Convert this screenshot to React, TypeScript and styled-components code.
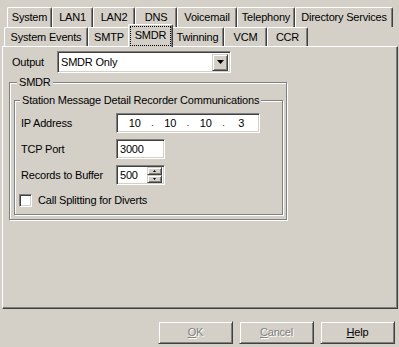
import React from "react";
import styled, { createGlobalStyle, css } from "styled-components";

const Global = createGlobalStyle`
  html, body { margin: 0; padding: 0; background: #d4d0c8; }
  body { font-family: "Liberation Sans", Arial, sans-serif; font-size: 11px; letter-spacing: -0.2px; color: #000; }
  * { box-sizing: border-box; }
`;

const Window = styled.div`
  width: 399px;
  height: 347px;
  background: #d4d0c8;
  display: flex;
  flex-direction: column;
  overflow: hidden;
`;

const TabStrip = styled.div`
  padding-top: 7px;
  display: flex;
  flex-direction: column;
`;

const TabRow = styled.div<{ $indent: number; $h: number }>`
  display: flex;
  align-items: flex-end;
  height: ${(p) => p.$h}px;
  margin-left: ${(p) => p.$indent}px;
`;

const Tab = styled.div<{ $w: number; $sel?: boolean }>`
  flex: 0 0 ${(p) => p.$w}px;
  width: ${(p) => p.$w}px;
  height: 100%;
  background: #d4d0c8;
  border-left: 1px solid #fff;
  border-top: 1px solid #fff;
  border-right: 1px solid #404040;
  box-shadow: inset -1px 0 #808080;
  border-radius: 2px 2px 0 0;
  display: flex;
  align-items: flex-start;
  justify-content: center;
  padding-top: 3px;
  line-height: 13px;
  white-space: nowrap;
  ${(p) =>
    p.$sel &&
    css`
      position: relative;
      z-index: 2;
      height: calc(100% + 4px);
      margin: 0 -2px -1px -2px;
      flex-basis: ${p.$w + 4}px;
      width: ${p.$w + 4}px;
      padding-top: 2px;
    `}
`;

const FocusLabel = styled.span`
  outline: 1px dotted #000;
  outline-offset: 0;
  padding: 2px 4px 3px;
`;

const Panel = styled.div`
  margin: 0 1px 0 2px;
  height: 263px;
  border-top: 1px solid #fff;
  border-left: 1px solid #fff;
  border-right: 1px solid #404040;
  border-bottom: 1px solid #404040;
  box-shadow: inset -1px -1px #808080;
  padding: 4px 0 0 0;
  display: flex;
  flex-direction: column;
`;

const OutputRow = styled.div`
  display: flex;
  align-items: center;
  height: 22px;
  padding-left: 9px;
`;

const Label = styled.span<{ $w?: number }>`
  width: ${(p) => (p.$w ? `${p.$w}px` : "auto")};
  flex: 0 0 auto;
  line-height: 13px;
  white-space: nowrap;
`;

const sunken = css`
  background: #fff;
  border-top: 1px solid #808080;
  border-left: 1px solid #808080;
  border-right: 1px solid #fff;
  border-bottom: 1px solid #fff;
  box-shadow: inset 1px 1px #404040, inset -1px -1px #d4d0c8;
`;

const raised = css`
  background: #d4d0c8;
  border-top: 1px solid #d4d0c8;
  border-left: 1px solid #d4d0c8;
  border-right: 1px solid #404040;
  border-bottom: 1px solid #404040;
  box-shadow: inset 1px 1px #fff, inset -1px -1px #808080;
`;

const Select = styled.div`
  ${sunken};
  width: 174px;
  height: 22px;
  display: flex;
  align-items: center;
  padding: 2px 2px 2px 3px;
  line-height: 13px;
`;

const SelectText = styled.span`
  flex: 1;
`;

const DropButton = styled.div`
  ${raised};
  width: 16px;
  height: 17px;
  display: flex;
  align-items: center;
  justify-content: center;
`;

const Group = styled.fieldset<{ $mt: number; $ml: number; $mr: number; $w?: number; $h: number }>`
  margin: ${(p) => p.$mt}px ${(p) => p.$mr}px 0 ${(p) => p.$ml}px;
  ${(p) => (p.$w ? `width: ${p.$w}px;` : "")}
  height: ${(p) => p.$h}px;
  min-width: 0;
  padding: 0;
  border: 1px solid #808080;
  border-radius: 0;
  box-shadow: inset 1px 1px #fff, 1px 1px #fff;
  display: flex;
  flex-direction: column;
`;

const Legend = styled.legend<{ $ml: number }>`
  margin-left: ${(p) => p.$ml}px;
  padding: 0 2px;
  line-height: 13px;
  background: #d4d0c8;
  position: relative;
  z-index: 1;
`;

const FieldGrid = styled.div`
  display: grid;
  grid-template-columns: 95px auto;
  grid-template-rows: 20px 20px 20px;
  row-gap: 6px;
  align-items: center;
  padding: 6px 0 0 6px;
`;

const IpBox = styled.div`
  ${sunken};
  width: 144px;
  height: 20px;
  display: grid;
  grid-template-columns: 1fr 8px 1fr 8px 1fr 8px 1fr;
  align-items: center;
  text-align: center;
  line-height: 13px;
  padding: 0 4px;
`;

const Dot = styled.span`
  font-size: 9px;
  color: #000;
`;

const TextBox = styled.div`
  ${sunken};
  width: 49px;
  height: 20px;
  display: flex;
  align-items: center;
  padding: 0 3px;
  line-height: 13px;
`;

const Spin = styled.div`
  margin-left: auto;
  margin-right: -1px;
  display: flex;
  flex-direction: column;
  width: 15px;
  height: 16px;
`;

const SpinBtn = styled.div`
  ${raised};
  flex: 1;
  display: flex;
  align-items: center;
  justify-content: center;
`;

const CheckRow = styled.div`
  display: flex;
  align-items: center;
  gap: 6px;
  padding: 9px 0 0 4px;
`;

const CheckBox = styled.div`
  ${sunken};
  width: 13px;
  height: 13px;
`;

const ButtonRow = styled.div`
  display: flex;
  justify-content: flex-end;
  gap: 6px;
  padding: 12px 4px 0 0;
`;

const Button = styled.div<{ $disabled?: boolean }>`
  ${raised};
  width: 75px;
  height: 23px;
  display: flex;
  align-items: center;
  justify-content: center;
  line-height: 13px;
  color: ${(p) => (p.$disabled ? "#808080" : "#000")};
  text-shadow: ${(p) => (p.$disabled ? "1px 1px #fff" : "none")};
  u { text-decoration-thickness: 1px; text-underline-offset: 1px; }
`;

const Arrow = ({ dir, size }: { dir: "up" | "down"; size: number }) => {
  const w = size * 2 - 1;
  const pts =
    dir === "down"
      ? `0,0 ${w},0 ${w / 2},${size}`
      : `0,${size} ${w},${size} ${w / 2},0`;
  return (
    <svg width={w} height={size} viewBox={`0 0 ${w} ${size}`} style={{ display: "block" }}>
      <polygon points={pts} fill="#000" />
    </svg>
  );
};

const row1 = [
  { t: "System", w: 45 },
  { t: "LAN1", w: 41 },
  { t: "LAN2", w: 42 },
  { t: "DNS", w: 42 },
  { t: "Voicemail", w: 60 },
  { t: "Telephony", w: 58 },
  { t: "Directory Services", w: 98 },
];

const row2 = [
  { t: "System Events", w: 84 },
  { t: "SMTP", w: 42 },
  { t: "SMDR", w: 41, sel: true },
  { t: "Twinning", w: 53 },
  { t: "VCM", w: 43 },
  { t: "CCR", w: 41 },
];

export default function App() {
  return (
    <Window>
      <Global />
      <TabStrip>
        <TabRow $indent={7} $h={20}>
          {row1.map((t) => (
            <Tab key={t.t} $w={t.w}>
              {t.t}
            </Tab>
          ))}
        </TabRow>
        <TabRow $indent={4} $h={19}>
          {row2.map((t) =>
            t.sel ? (
              <Tab key={t.t} $w={t.w} $sel>
                <FocusLabel>{t.t}</FocusLabel>
              </Tab>
            ) : (
              <Tab key={t.t} $w={t.w}>
                {t.t}
              </Tab>
            )
          )}
        </TabRow>
      </TabStrip>
      <Panel>
        <OutputRow>
          <Label $w={45}>Output</Label>
          <Select>
            <SelectText>SMDR Only</SelectText>
            <DropButton>
              <Arrow dir="down" size={4} />
            </DropButton>
          </Select>
        </OutputRow>
        <Group $mt={3} $ml={6} $mr={0} $w={278} $h={144}>
          <Legend $ml={7}>SMDR</Legend>
          <Group $mt={5} $ml={4} $mr={3} $h={121}>
            <Legend $ml={5}>Station Message Detail Recorder Communications</Legend>
            <FieldGrid>
              <Label>IP Address</Label>
              <IpBox>
                <span>10</span>
                <Dot>.</Dot>
                <span>10</span>
                <Dot>.</Dot>
                <span>10</span>
                <Dot>.</Dot>
                <span>3</span>
              </IpBox>
              <Label>TCP Port</Label>
              <TextBox>3000</TextBox>
              <Label>Records to Buffer</Label>
              <TextBox>
                500
                <Spin>
                  <SpinBtn>
                    <Arrow dir="up" size={2} />
                  </SpinBtn>
                  <SpinBtn>
                    <Arrow dir="down" size={2} />
                  </SpinBtn>
                </Spin>
              </TextBox>
            </FieldGrid>
            <CheckRow>
              <CheckBox />
              <Label>Call Splitting for Diverts</Label>
            </CheckRow>
          </Group>
        </Group>
      </Panel>
      <ButtonRow>
        <Button $disabled>
          <span>
            <u>O</u>K
          </span>
        </Button>
        <Button $disabled>
          <span>
            <u>C</u>ancel
          </span>
        </Button>
        <Button>
          <span>
            <u>H</u>elp
          </span>
        </Button>
      </ButtonRow>
    </Window>
  );
}
